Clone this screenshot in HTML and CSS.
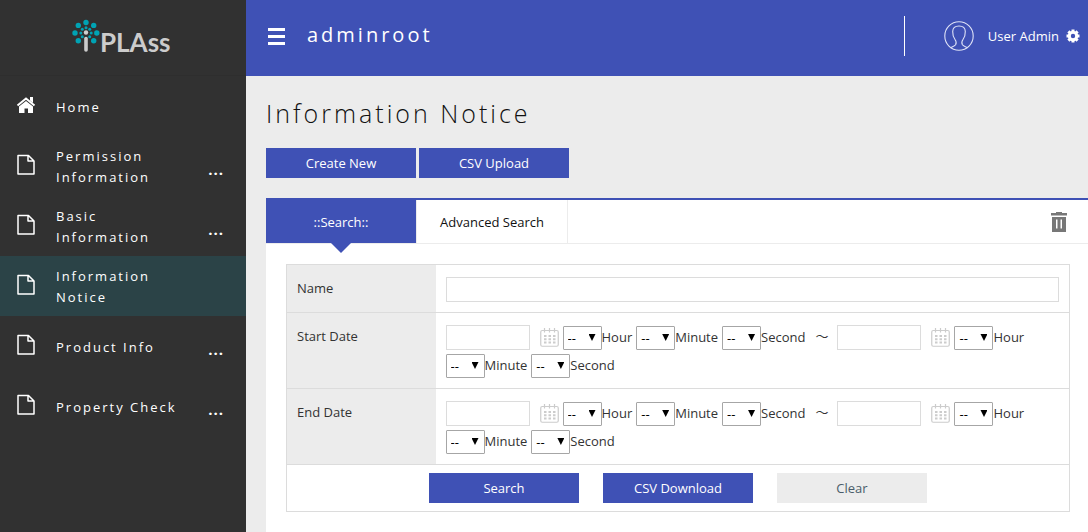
FILE: index.html
```html
<!DOCTYPE html>
<html lang="en">
<head>
<meta charset="utf-8">
<title>Information Notice</title>
<link rel="stylesheet" href="styles.css">
</head>
<body>
<svg class="defs" aria-hidden="true">
  <symbol id="doc" viewBox="0 0 18 21">
    <path d="M1 1.500h10.500L17 7v13H1z M11 1.500v5.500h6" fill="none" stroke="currentColor" stroke-width="1.500" stroke-linejoin="round"/>
  </symbol>
  <symbol id="calendar" viewBox="0 0 19 19">
    <rect x=".75" y="2.500" width="17.500" height="15.750" rx="1.500" fill="#fff" stroke="#ccc" stroke-width="1.200"/>
    <path d="M4.500 0v4.500M9.500 0v4.500M14.500 0v4.500" stroke="#ccc" stroke-width="1.200"/>
    <path d="M4 8h11.500M4 11.200h11.500M4 14.400h11.500" stroke="#ccc" stroke-width="2" stroke-dasharray="2.500 2"/>
  </symbol>
</svg>
<div class="app">
  <aside class="sidebar">
    <div class="brand">
      <svg class="mark" viewBox="0 0 28 34" aria-hidden="true">
        <g fill="#00a3b4">
          <circle cx="14" cy="3.500" r="2.700"/><circle cx="21.700" cy="6.400" r="2.700"/><circle cx="24.800" cy="14" r="2.700"/><circle cx="21.700" cy="21.700" r="2.700"/>
          <circle cx="6.300" cy="21.700" r="2.700"/><circle cx="3" cy="14" r="2.700"/><circle cx="6.300" cy="6.400" r="2.700"/>
          <circle cx="14" cy="8.800" r="1.500"/><circle cx="17.700" cy="10.300" r="1.500"/><circle cx="19.200" cy="14" r="1.500"/><circle cx="17.700" cy="17.700" r="1.500"/>
          <circle cx="10.300" cy="17.700" r="1.500"/><circle cx="8.800" cy="14" r="1.500"/><circle cx="10.300" cy="10.300" r="1.500"/>
        </g>
        <circle cx="14" cy="13.500" r="2.200" fill="#d0d0d0"/>
        <path d="M14 19.500v11.500" stroke="#ccc" stroke-width="3.600" stroke-linecap="round"/>
      </svg>
      <span class="brand-name">PLAss</span>
    </div>
    <nav>
      <a class="item" href="#">
        <svg class="home" viewBox="0 0 20 16" aria-hidden="true"><path d="M1.500 8.500L10 1.500l8.500 7" fill="none" stroke="#fff" stroke-width="2"/><path d="M14 0h3v6l-3-2.500zM10 4l7 5.500V16h-5v-4.500H8.500V16H3V9.500z" fill="#fff"/></svg>
        <span class="label">Home</span>
      </a>
      <a class="item" href="#"><svg class="doc"><use href="#doc"/></svg><span class="label">Permission Information</span><span class="more">...</span></a>
      <a class="item" href="#"><svg class="doc"><use href="#doc"/></svg><span class="label">Basic Information</span><span class="more">...</span></a>
      <a class="item active" href="#" aria-current="page"><svg class="doc"><use href="#doc"/></svg><span class="label">Information Notice</span></a>
      <a class="item" href="#"><svg class="doc"><use href="#doc"/></svg><span class="label">Product Info</span><span class="more">...</span></a>
      <a class="item" href="#"><svg class="doc"><use href="#doc"/></svg><span class="label">Property Check</span><span class="more">...</span></a>
    </nav>
  </aside>
  <div class="main">
    <header class="topbar">
      <button class="menu" type="button" aria-label="Menu"><span></span><span></span><span></span></button>
      <span class="tenant">adminroot</span>
      <a class="user" href="#">
        <svg class="avatar" viewBox="0 0 30 30" aria-hidden="true"><g fill="none" stroke="#dfe3f7" stroke-width="1.100"><circle cx="15" cy="15" r="14.200"/><path d="M7 26.500c2.200-1 4-1.800 4.600-2.800.9-1.600.6-3.600-.6-5.200C9.200 16 8.600 13.500 8.700 10.500 8.800 6.500 11 5 15 5s6.200 1.500 6.300 5.500c.1 3-.5 5.500-2.300 8-1.200 1.600-1.500 3.600-.6 5.200.6 1 2.400 1.800 4.600 2.800"/></g></svg>
        <span>User Admin</span>
        <svg class="gear" viewBox="0 0 14 14" aria-hidden="true"><circle cx="7" cy="7" r="3.700" fill="none" stroke="#fff" stroke-width="3"/><path d="M7 .5v2.500M7 11v2.500M.5 7H3M11 7h2.500M2.400 2.400l1.600 1.600M10 10l1.600 1.600M2.400 11.600L4 10M10 4l1.600-1.600" stroke="#fff" stroke-width="3"/></svg>
      </a>
    </header>
    <main class="content">
      <h1>Information Notice</h1>
      <div class="actions">
        <button class="btn" type="button">Create New</button>
        <button class="btn" type="button">CSV Upload</button>
      </div>
      <section class="panel">
        <div class="tabs">
          <button class="tab current" type="button">::Search::</button>
          <button class="tab" type="button">Advanced Search</button>
          <button class="trash" type="button" aria-label="Delete">
            <svg viewBox="0 0 16 20" aria-hidden="true"><path d="M0 1h5V0h6v1h5v2.500H0z" fill="#777"/><path d="M1 5h14v15H1zM5 7.500v9h1.500v-9zM9.500 7.500v9H11v-9z" fill="#777" fill-rule="evenodd"/></svg>
          </button>
        </div>
        <form class="search">
          <table>
            <tbody>
              <tr><th scope="row"><label for="name">Name</label></th><td><input class="text wide" id="name" type="text"></td></tr>
              <tr><th scope="row">Start Date</th><td><div class="range">
                <input class="text date" type="text" aria-label="Start date from"><svg class="cal"><use href="#calendar"/></svg>
                <label class="pick"><span class="box"><select><option>--</option></select></span>Hour</label>
                <label class="pick"><span class="box"><select><option>--</option></select></span>Minute</label>
                <label class="pick"><span class="box"><select><option>--</option></select></span>Second</label>
                <span class="tilde">～</span>
                <input class="text date" type="text" aria-label="Start date to"><svg class="cal"><use href="#calendar"/></svg>
                <label class="pick"><span class="box"><select><option>--</option></select></span>Hour</label>
                <label class="pick"><span class="box"><select><option>--</option></select></span>Minute</label>
                <label class="pick"><span class="box"><select><option>--</option></select></span>Second</label>
              </div></td></tr>
              <tr><th scope="row">End Date</th><td><div class="range">
                <input class="text date" type="text" aria-label="End date from"><svg class="cal"><use href="#calendar"/></svg>
                <label class="pick"><span class="box"><select><option>--</option></select></span>Hour</label>
                <label class="pick"><span class="box"><select><option>--</option></select></span>Minute</label>
                <label class="pick"><span class="box"><select><option>--</option></select></span>Second</label>
                <span class="tilde">～</span>
                <input class="text date" type="text" aria-label="End date to"><svg class="cal"><use href="#calendar"/></svg>
                <label class="pick"><span class="box"><select><option>--</option></select></span>Hour</label>
                <label class="pick"><span class="box"><select><option>--</option></select></span>Minute</label>
                <label class="pick"><span class="box"><select><option>--</option></select></span>Second</label>
              </div></td></tr>
              <tr><td class="submit" colspan="2"><div class="buttons">
                <button class="btn" type="button">Search</button>
                <button class="btn" type="button">CSV Download</button>
                <button class="btn plain" type="reset">Clear</button>
              </div></td></tr>
            </tbody>
          </table>
        </form>
      </section>
    </main>
  </div>
</div>
</body>
</html>
```
FILE: styles.css
```css
* { box-sizing: border-box; }
body {
  margin: 0;
  background: #ececec;
  color: #333;
  font: 13px/20px "Open Sans", "Noto Sans CJK JP", sans-serif;
}
button, input, select { font: inherit; color: inherit; margin: 0; }
button { border: 0; padding: 0; background: none; cursor: pointer; }
a { color: inherit; text-decoration: none; }
.defs { display: none; }
.app { display: flex; min-height: 100vh; }

.sidebar { flex: 0 0 246px; background: #313131; color: #fff; }
.brand { display: flex; height: 76px; padding: 19px 0 0 72px; border-bottom: 1px solid #2e2e2e; }
.mark { width: 28px; height: 34px; }
.brand-name { color: #ccc; font: 700 26px/46px Lato, sans-serif; }
.item { display: flex; align-items: center; height: 60px; padding: 0 20px 0 16px; letter-spacing: 2px; line-height: 21px; }
.item.active { background: #2b4347; }
.item .doc { width: 20px; height: 21px; margin-bottom: 3px; }
.home { width: 20px; height: 16px; margin-bottom: 2px; }
.label { width: 120px; margin-left: 20px; padding-top: 2px; }
.item:nth-child(n+5) .label { width: 130px; }
.more { margin-left: auto; padding: 6px 2px 0 0; font-size: 15px; font-weight: 700; letter-spacing: 1px; }

.main { flex: 1; min-width: 0; display: flex; flex-direction: column; }
.topbar { display: flex; align-items: center; height: 76px; padding: 0 8px 4px 22px; background: #3f51b5; color: #fff; }
.menu { display: grid; gap: 4px; width: 17px; }
.menu span { height: 3px; background: #fff; }
.tenant { margin: 0 0 2px 22px; font-size: 20px; letter-spacing: 3px; }
.user { display: flex; align-items: center; height: 40px; margin-left: auto; padding-left: 39px; border-left: 1px solid #fff; }
.avatar { width: 30px; height: 30px; margin-right: 14px; }
.gear { width: 14px; height: 14px; margin-left: 7px; }

.content { flex: 1; display: flex; flex-direction: column; padding: 20px 0 0 20px; }
h1 { margin: 0 0 18px; color: #111; font-size: 25px; font-weight: 300; line-height: 34px; letter-spacing: 3px; }
.actions { display: flex; gap: 3px; }
.btn { width: 150px; height: 30px; background: #3f51b5; color: #fff; }
.btn.plain { background: #ececec; color: #4a5c6a; }
.panel { flex: 1; margin-top: 20px; background: #fff; border-top: 2px solid #3f51b5; }
.tabs { display: flex; height: 44px; border-bottom: 1px solid #ececec; }
.tab { width: 151px; border-right: 1px solid #ececec; color: #111; }
.tab.current { position: relative; height: 43px; background: #3f51b5; color: #fff; }
.tab.current::after {
  content: "";
  position: absolute;
  top: 100%;
  left: 65px;
  border: 10px solid transparent;
  border-top-color: #3f51b5;
  border-bottom: 0;
}
.trash { margin-left: auto; padding-right: 21px; }
.trash svg { display: block; width: 16px; height: 20px; }

.search { padding: 20px 18px 20px 20px; }
table { width: 100%; border-collapse: collapse; border: 1px solid #dcdcdc; }
tr { border-bottom: 1px solid #dcdcdc; }
th { width: 149px; padding: 13px 10px; background: #ececec; font-weight: 400; text-align: left; vertical-align: top; }
td { padding: 12px 10px 10px; }
.text { display: block; height: 25px; padding: 0 4px; border: 1px solid #dcdcdc; background: #fff; }
.wide { width: 100%; }
.date { width: 84px; }
.range { display: flex; flex-wrap: wrap; align-items: flex-end; gap: 4px; }
.cal { width: 19px; height: 19px; margin: 0 0 3px 6px; }
.pick { display: flex; line-height: 22px; }
.box { position: relative; }
.box::after {
  content: "";
  position: absolute;
  top: 8px;
  right: 6px;
  width: 7px;
  height: 7px;
  background: #000;
  clip-path: polygon(0 0, 100% 0, 50% 100%);
  pointer-events: none;
}
select { display: block; appearance: none; width: 39px; height: 24px; padding: 0 4px; border: 1px solid #a6a6a6; border-radius: 1px; background: #fff; color: #000; }
.tilde { margin: 0 5px 4px 6px; line-height: 20px; }
td.submit { padding: 8px; }
.buttons { display: flex; justify-content: center; gap: 24px; }
```
